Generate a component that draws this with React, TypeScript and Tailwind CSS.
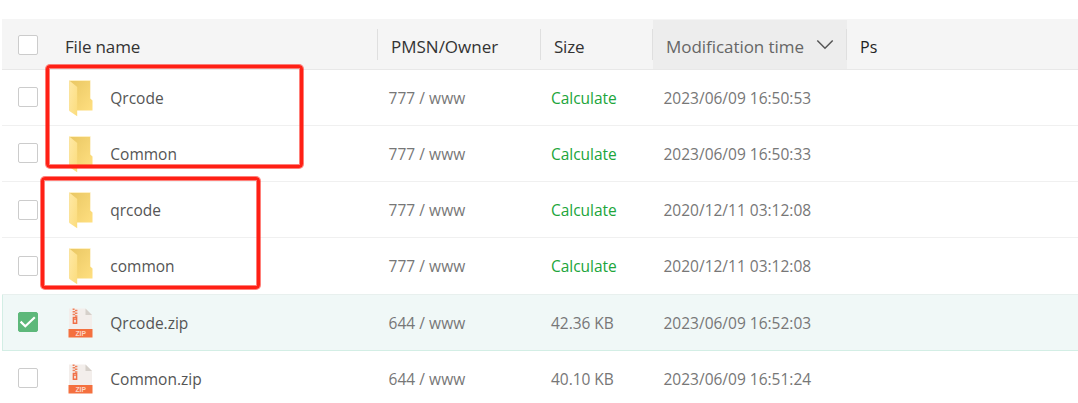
import React, { useState } from 'react';
import clsx from 'clsx';

interface FileItem {
  name: string;
  type: 'folder' | 'zip';
  owner: string;
  size: string | null;
  time: string;
}

const files: FileItem[] = [
  { name: 'Qrcode', type: 'folder', owner: '777 / www', size: null, time: '2023/06/09 16:50:53' },
  { name: 'Common', type: 'folder', owner: '777 / www', size: null, time: '2023/06/09 16:50:33' },
  { name: 'qrcode', type: 'folder', owner: '777 / www', size: null, time: '2020/12/11 03:12:08' },
  { name: 'common', type: 'folder', owner: '777 / www', size: null, time: '2020/12/11 03:12:08' },
  { name: 'Qrcode.zip', type: 'zip', owner: '644 / www', size: '42.36 KB', time: '2023/06/09 16:52:03' },
  { name: 'Common.zip', type: 'zip', owner: '644 / www', size: '40.10 KB', time: '2023/06/09 16:51:24' },
];

const columns = 'grid grid-cols-[63px_313px_163px_112px_194px_1fr]';

function Checkbox({ checked, onClick }: { checked: boolean; onClick?: () => void }) {
  return (
    <button
      role="checkbox"
      aria-checked={checked}
      onClick={onClick}
      className={clsx(
        'w-5 h-5 rounded-[2px] border block cursor-pointer',
        checked ? 'bg-[#5db87a] border-[#5db87a]' : 'bg-white border-[#cccccc]'
      )}
    >
      {checked && (
        <svg viewBox="0 0 18 18" className="w-[18px] h-[18px]" fill="none">
          <path d="M1.6 8.6 L6.3 13.2 L15.8 4.2" stroke="#fff" strokeWidth="2.2" />
        </svg>
      )}
    </button>
  );
}

function FolderIcon() {
  return (
    <svg viewBox="0 0 26 38" className="w-[26px] h-[38px] shrink-0">
      <defs>
        <linearGradient id="folderBack" x1="0" y1="0" x2="1" y2="1">
          <stop offset="0" stopColor="#e9c763" />
          <stop offset="1" stopColor="#ffdf80" />
        </linearGradient>
        <linearGradient id="folderFront" x1="0" y1="0" x2="1" y2="1">
          <stop offset="0" stopColor="#ffe9a6" />
          <stop offset="1" stopColor="#fbdc7c" />
        </linearGradient>
      </defs>
      <path d="M1.3 1.5 H22.3 V19.5 L24.5 21.5 V31.5 H1.3 Z" fill="url(#folderBack)" />
      <path d="M1.3 1.5 L9.2 8 V37.3 L1.3 32 Z" fill="url(#folderFront)" />
      <path d="M1.3 1.5 H22.3" stroke="#fff0c4" strokeWidth="1" />
    </svg>
  );
}

function ZipIcon() {
  return (
    <svg viewBox="0 0 25 30" className="w-[25px] h-[30px] shrink-0">
      <path d="M1 0.5 H17.5 L24 7 V22 H1 Z" fill="#f3eeeb" />
      <path d="M17.5 0.5 L24 7 H17.5 Z" fill="#d6d0ca" />
      {/* Zipper teeth and pull */}
      <path d="M4.6 1.2 h2 M7 2.4 h2.4 M4.6 3.8 h2.6 M7 5.2 h2.4 M4.6 6.6 h2.6 M7 8 h2.4" stroke="#f0805a" strokeWidth="1.5" />
      <path d="M5.4 9.6 h3.2 v5.7 h-3.2 Z" fill="none" stroke="#f07048" strokeWidth="1.5" />
      <path d="M6 11.2 h2.2" stroke="#f07048" strokeWidth="1.2" />
      <rect x="0.5" y="21" width="24" height="8.5" fill="#f4703f" />
      <text x="12.7" y="27.8" textAnchor="middle" fontSize="6.8" fontWeight="700" textLength="10.5" fill="#fcd5c5" fontFamily="Liberation Sans, sans-serif">ZIP</text>
    </svg>
  );
}

export default function App() {
  const [selected, setSelected] = useState<string[]>(['Qrcode.zip']);

  const toggle = (name: string) => {
    setSelected(selected.includes(name) ? selected.filter((n) => n !== name) : [...selected, name]);
  };

  const allSelected = selected.length === files.length;

  return (
    <div className="relative w-full h-[403px] overflow-hidden bg-white pt-[19px] pl-0.5 font-['Open_Sans','Noto_Sans',sans-serif] whitespace-nowrap">
      {/* Table head */}
      <div className={clsx(columns, 'h-[51px] bg-[#f5f5f5] border-b border-[#e8e8e8] text-[17px] text-[#333]')}>
        <div className="pl-4 pt-4">
          <Checkbox checked={allSelected} onClick={() => setSelected(allSelected ? [] : files.map((f) => f.name))} />
        </div>
        <div className="flex items-center relative pt-[5px]">
          <span className="tracking-[-0.15px]">File name</span>
          <span className="absolute right-0 top-[10px] h-[31px] w-px bg-[#dfdfdf]" />
        </div>
        <div className="flex items-center relative pt-[5px] pl-[13px]">
          <span>PMSN/Owner</span>
          <span className="absolute right-0 top-[10px] h-[31px] w-px bg-[#dfdfdf]" />
        </div>
        <div className="flex items-center relative pt-[5px] pl-[13px]">
          <span className="tracking-[-0.2px]">Size</span>
          <span className="absolute right-0 top-[10px] h-[31px] w-px bg-[#dfdfdf]" />
        </div>
        <div className="flex items-center relative mt-px pt-1 pl-[13px] bg-[#ededed] text-[#666]">
          <span className="w-[150px] tracking-[-0.05px]">Modification time</span>
          <svg viewBox="0 0 18 12" className="w-[18px] h-3 mb-1" fill="none">
            <path d="M1.3 1.5 L9 9.2 L16.7 1.5" stroke="#555" strokeWidth="1.5" />
          </svg>
          <span className="absolute right-0 top-[9px] h-[31px] w-px bg-[#dfdfdf]" />
        </div>
        <div className="flex items-center pt-[5px] pl-[13px] text-base text-[#222]">Ps</div>
      </div>

      {/* Rows */}
      {files.map((file, index) => {
        const isSelected = selected.includes(file.name);
        const next = files[index + 1];
        const beforeSelected = !!next && selected.includes(next.name);
        return (
          <div
            key={file.name}
            className={clsx(
              columns,
              'border-b text-[15.5px] text-[#777] items-center',
              isSelected
                ? 'h-[57px] bg-[#f0f8f7] border-t border-[#d3eee5] border-t-[#e8f0ee] shadow-[inset_1px_0_#d3eee5]'
                : 'h-14',
              !isSelected && (beforeSelected ? 'border-transparent' : 'border-[#f0f0f0]')
            )}
          >
            <div className={clsx('pl-4', index !== 2 && index !== 3 && 'pb-0.5')}>
              <Checkbox checked={isSelected} onClick={() => toggle(file.name)} />
            </div>
            <div className="flex items-center text-[#555]">
              <div className={clsx('w-[45.3px] pl-[3px]', (index === 2 || index === 3) && 'pt-px')}>
                {file.type === 'folder' ? <FolderIcon /> : <ZipIcon />}
              </div>
              <span className="pt-0.5">{file.name}</span>
            </div>
            <div className="pl-[10.5px] pt-0.5 tracking-[0.05px]">{file.owner}</div>
            <div className={clsx('pl-2.5 pt-0.5 tracking-[-0.04px]', !file.size && 'text-[#20a53a]')}>{file.size ?? 'Calculate'}</div>
            <div className="pl-[10.5px] pt-0.5">{file.time}</div>
          </div>
        );
      })}

      {/* Annotation frames around the name pairs */}
      <div className="absolute left-[46px] top-[65px] w-[257px] h-[103px] border-[3px] border-[#ff2015] rounded-[4px] shadow-[0_0_0_1px_#ff201590,inset_0_0_0_1px_#ff201590]" />
      <div className="absolute left-[41px] top-[177px] w-[219px] h-[112px] border-[3px] border-[#ff2015] rounded-[4px] shadow-[0_0_0_1px_#ff201590,inset_0_0_0_1px_#ff201590]" />
    </div>
  );
}
